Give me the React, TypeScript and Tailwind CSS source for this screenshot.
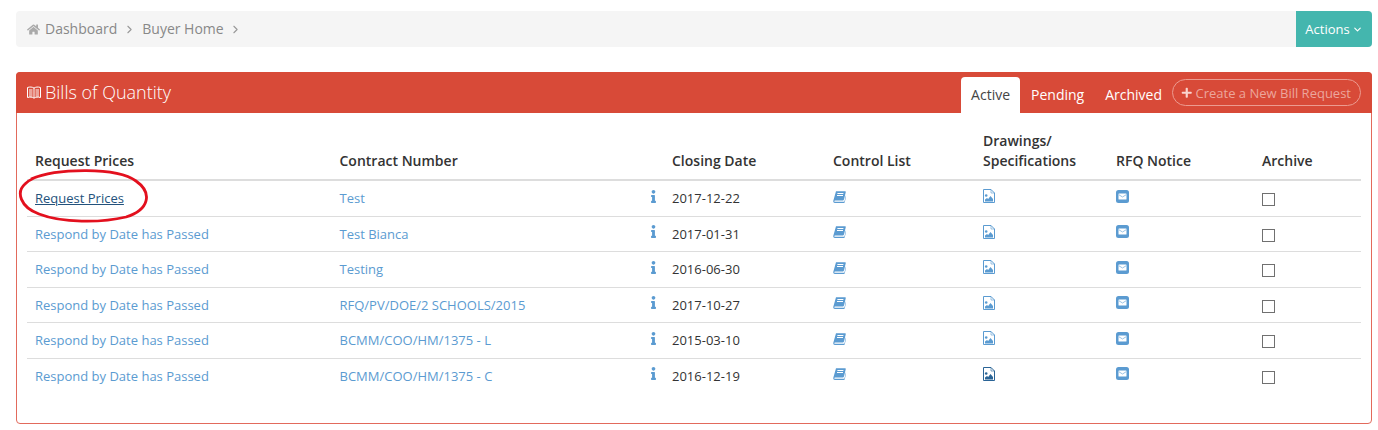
import React from 'react';
import { FaHome, FaInfo, FaPlus } from 'react-icons/fa';
import { ChevronRight, ChevronDown } from 'lucide-react';

const rows = [
  { request: 'Request Prices', contract: 'Test', date: '2017-12-22' },
  { request: 'Respond by Date has Passed', contract: 'Test Bianca', date: '2017-01-31' },
  { request: 'Respond by Date has Passed', contract: 'Testing', date: '2016-06-30' },
  { request: 'Respond by Date has Passed', contract: 'RFQ/PV/DOE/2 SCHOOLS/2015', date: '2017-10-27' },
  { request: 'Respond by Date has Passed', contract: 'BCMM/COO/HM/1375 - L', date: '2015-03-10' },
  { request: 'Respond by Date has Passed', contract: 'BCMM/COO/HM/1375 - C', date: '2016-12-19' },
];

function SlantBook() {
  return (
    <svg width="13" height="12" viewBox="0 0 13 12" className="block text-[#5b9bd1]">
      <path d="M3 .3h9.200c.5 0 .7.4.6.8L11 8.600c-.1.5-.5.8-1 .8H2.200c-.7 0-1 .4-.9.8.1.4.4.6.9.6h8.500c.4 0 .7-.2.8-.6l1.800-7.500.4.3-1.900 7.900c-.1.6-.6 1-1.200 1H2C.8 12 .1 11 .3 9.800z" fill="currentColor" />
      <path d="M4.400 2.500h6M4 4.500h6" stroke="#fff" strokeWidth="1" />
    </svg>
  );
}

function OpenBook() {
  return (
    <svg width="14" height="13" viewBox="0 0 14 13" className="text-white">
      <path d="M.5 1.500c2.500-.8 4.800-.6 6.500.6 1.700-1.200 4-1.400 6.500-.6v10c-2.500-.7-4.800-.5-6.500.7-1.700-1.200-4-1.400-6.500-.7z" fill="none" stroke="currentColor" strokeWidth="1" />
      <path d="M7 2v10M2 4h3.500M2 6h3.500M2 8h3.500M2 10h3.500M8.500 4H12M8.500 6H12M8.500 8H12M8.500 10H12" stroke="currentColor" strokeWidth="1" />
    </svg>
  );
}

function FileImage({ dark }: { dark: boolean }) {
  return (
    <svg width="12" height="14" viewBox="0 0 12 14" className={`block ${dark ? 'text-[#2a6496]' : 'text-[#5b9bd1]'}`}>
      <path d="M.5.500h7.500l3.500 3.500v9.500H.5z" fill="none" stroke="currentColor" strokeWidth="1" />
      <path d="M8 .5v3.500h3.500" fill="none" stroke="currentColor" strokeWidth="1" opacity="0.6" />
      <circle cx="3.200" cy="6.500" r="1.300" fill="currentColor" />
      <path d="M2 12.500v-2l2-1.500 1.200 1 2.300-3 2.500 3v2.500z" fill="currentColor" />
    </svg>
  );
}

function EnvelopeBox() {
  return (
    <svg width="13" height="13" viewBox="0 0 13 13" className="block text-[#5b9bd1]">
      <rect width="13" height="13" rx="2.500" fill="currentColor" />
      <rect x="2.500" y="3.500" width="8" height="6" rx=".5" fill="#fff" />
      <path d="M2.500 4.500l4 2.500 4-2.500" fill="none" stroke="#9cc3e4" strokeWidth="1" />
    </svg>
  );
}

export default function App() {
  return (
    <div className="relative pl-4 pr-[6px] pt-[11px] h-[430px] bg-white text-[13px] leading-[1.42857] text-[#333]" style={{ fontFamily: '"Open Sans", sans-serif' }}>
      <div className="flex justify-between h-[36px] bg-[#f5f5f5] rounded">
        <div className="flex items-center pl-[11px] text-[14px] text-[#888]">
          <FaHome className="text-[13px] text-[#aaa] mr-[5px]" />
          <span>Dashboard</span>
          <ChevronRight className="w-[13px] h-[13px] ml-[6px] text-[#999]" strokeWidth={2} />
          <span className="ml-[6px]">Buyer Home</span>
          <ChevronRight className="w-[13px] h-[13px] ml-[5px] text-[#999]" strokeWidth={2} />
        </div>
        <button className="flex items-center justify-center w-[76px] bg-[#44b6ae] text-white rounded-r">
          Actions
          <ChevronDown className="w-[11px] h-[11px] ml-[2px]" strokeWidth={2.5} />
        </button>
      </div>

      <div className="mt-[25px] h-[352px] border border-[#e26a5c] rounded">
        <div className="flex items-end justify-between h-[41px] -mt-px -mx-px bg-[#d84a38] rounded-t pl-[11px] pr-[11px]">
          <div className="flex items-center self-center gap-[4px] text-white text-[18px] font-light">
            <OpenBook />
            <span>Bills of Quantity</span>
          </div>
          <div className="flex items-end h-full text-[14px]">
            <span className="flex items-center h-[36px] px-[10px] bg-white text-[#444] rounded-t">Active</span>
            <span className="flex items-center h-[36px] ml-[1px] px-[10px] text-white">Pending</span>
            <span className="flex items-center h-[36px] ml-[1px] px-[10px] text-white">Archived</span>
            <button className="flex items-center self-start mt-[7px] h-[27px] pl-[8px] pr-[9px] pt-[1px] border border-[#ec9b90] rounded-full text-[13px] text-[#eca69c]">
              <FaPlus className="text-[11.5px] mr-[3px] text-[#f9d4ce]" />
              Create a New Bill Request
            </button>
          </div>
        </div>

        <div className="px-[10px] pt-[10px]">
          <table className="w-full table-fixed border-collapse">
            <colgroup>
              <col className="w-[304.5px]" />
              <col className="w-[332.5px]" />
              <col className="w-[161px]" />
              <col className="w-[150px]" />
              <col className="w-[133px]" />
              <col className="w-[146px]" />
              <col />
            </colgroup>
            <thead>
              <tr className="text-[14px] font-semibold text-left align-bottom border-b-2 border-[#ddd]">
                <th className="p-2 font-semibold">Request Prices</th>
                <th className="p-2 font-semibold">Contract Number</th>
                <th className="p-2 font-semibold">Closing Date</th>
                <th className="p-2 font-semibold">Control List</th>
                <th className="p-2 font-semibold">Drawings/<br />Specifications</th>
                <th className="p-2 font-semibold">RFQ Notice</th>
                <th className="p-2 font-semibold">Archive</th>
              </tr>
            </thead>
            <tbody>
              {rows.map((row, i) => (
                <tr key={i} className="border-t border-[#ddd] first:border-t-0">
                  <td className="p-2">
                    <a className={i === 0 ? 'text-[#23527c] underline' : 'text-[#5b9bd1]'}>{row.request}</a>
                  </td>
                  <td className="p-2 relative text-[#5b9bd1]">
                    {row.contract}
                    <FaInfo className="absolute right-[4px] top-[8.7px] text-[13px]" />
                  </td>
                  <td className="p-2">{row.date}</td>
                  <td className="p-2"><div className="h-[18px] pt-[1.4px]"><SlantBook /></div></td>
                  <td className="p-2">
                    <div className="-mt-[0.3px] h-[18px]"><FileImage dark={i === 5} /></div>
                  </td>
                  <td className="p-2">
                    <div className="h-[18px] pt-[0.4px]"><EnvelopeBox /></div>
                  </td>
                  <td className="p-2">
                    <input type="checkbox" className="block appearance-none mt-[2.4px] w-[13px] h-[13px] border border-[#707070] bg-white" />
                  </td>
                </tr>
              ))}
            </tbody>
          </table>
        </div>
      </div>

      {/* hand drawn circle round the first link */}
      <svg className="absolute left-[17px] top-[168px]" width="134" height="56" viewBox="0 0 134 56" fill="none">
        <path d="M14 11C40 0 100-1 119 13c17 12 13 29-10 36-25 6-64 6-87-3C3 39-1 24 8 16c5-5 12-8 22-10" stroke="#e3101e" strokeWidth="2.8" />
      </svg>
    </div>
  );
}
